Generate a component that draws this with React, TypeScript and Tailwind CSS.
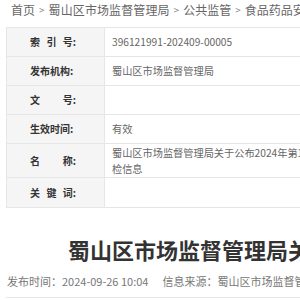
const rows: { label: string[]; value: string; tall?: boolean }[] = [
  { label: ['索', '引', '号:'], value: '396121991-202409-00005' },
  { label: ['发布机构:'], value: '蜀山区市场监督管理局' },
  { label: ['文', '号:'], value: '' },
  { label: ['生效时间:'], value: '有效' },
  { label: ['名', '称:'], value: '蜀山区市场监督管理局关于公布2024年第19期食品安全监督抽检信息', tall: true },
  { label: ['关', '键', '词:'], value: '' },
];

export default function App() {
  return (
    <div
      className="w-[300px] h-[300px] overflow-hidden bg-white"
      style={{ fontFamily: '"Noto Sans CJK SC", "Noto Sans", sans-serif' }}
    >
      <div className="w-[900px] pl-[6px]">
        {/* breadcrumb */}
        <div className="h-[19px] pl-[5px] flex items-center text-[12px] leading-none text-[#666] whitespace-nowrap">
          <span>首页</span>
          <span className="mx-[4px] text-[10px] text-[#888]">&gt;</span>
          <span className="tracking-[0.1px]">蜀山区市场监督管理局</span>
          <span className="mx-[4px] text-[10px] text-[#888]">&gt;</span>
          <span>公共监管</span>
          <span className="mx-[4px] text-[10px] text-[#888]">&gt;</span>
          <span>食品药品安全</span>
        </div>

        {/* info table */}
        <div className="mt-[8px] w-[392px] border border-[#e6e6e6]">
          {rows.map((r, i) => (
            <div
              key={i}
              className={`flex ${i < rows.length - 1 ? 'border-b border-[#e6e6e6]' : ''} ${r.tall ? 'h-[34px]' : 'h-[29px]'}`}
            >
              <div className="w-[98px] shrink-0 bg-[#f5f5f5] border-r border-[#e6e6e6] flex items-center pl-[23px]">
                <div className="w-[46px] flex justify-between text-[10px] font-bold text-[#333] leading-none">
                  {r.label.map((c, j) => (
                    <span key={j}>{c}</span>
                  ))}
                </div>
              </div>
              <div className="flex-1 flex items-center pl-[7px] pr-[8px] text-[10.2px] leading-[16px] text-[#666]">
                <span className="w-[284px]">{r.value}</span>
              </div>
            </div>
          ))}
        </div>

        {/* title */}
        <h1 className="mt-[26px] pl-[62px] text-[22px] leading-[30px] font-bold text-[#333] whitespace-nowrap">
          蜀山区市场监督管理局关于公布2024年第19期食品安全监督抽检信息
        </h1>

        {/* meta */}
        <div className="mt-[9px] pb-[8px] border-b border-[#e6e6e6] flex text-[11px] leading-[16px] text-[#777] whitespace-nowrap">
          <span className="pl-[1px]">发布时间：2024-09-26 10:04</span>
          <span className="ml-[14px]">信息来源：蜀山区市场监督管理局</span>
        </div>
      </div>
    </div>
  );
}
